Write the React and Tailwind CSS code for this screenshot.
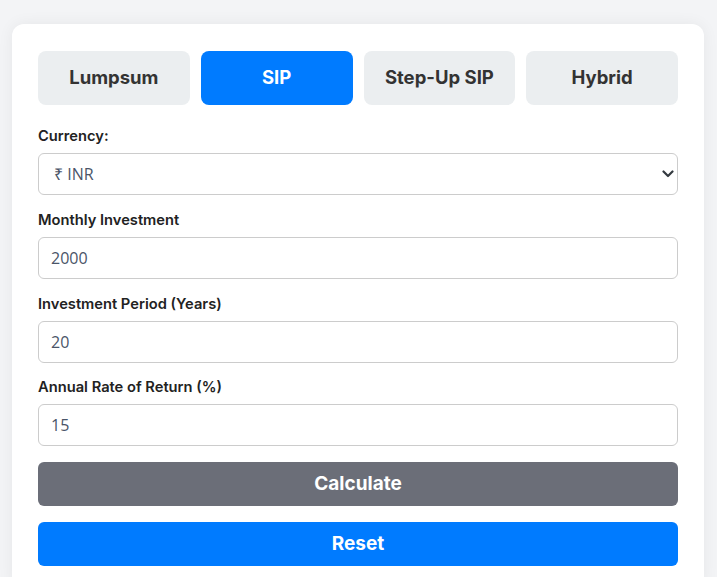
import React, { useState } from "react";

const tabs = ["Lumpsum", "SIP", "Step-Up SIP", "Hybrid"];

const fields = [
  { label: "Monthly Investment", value: "2000", gap: "mb-4" },
  { label: "Investment Period (Years)", value: "20", gap: "mb-[15px]" },
  { label: "Annual Rate of Return (%)", value: "15", gap: "mb-4" },
];

const Field = ({ label, gap = "mb-4", children }) => (
  <div className={gap}>
    <label className="block mb-2 text-[14.7px] leading-[18px] font-semibold text-[#222]">
      {label}
    </label>
    {children}
  </div>
);

const App = () => {
  const [active, setActive] = useState("SIP");
  const [values, setValues] = useState(fields.map((f) => f.value));

  return (
    <div
      className="min-h-screen bg-[#f3f4f6] pl-3 pr-[13px] pt-6"
      style={{ fontFamily: "Inter, 'Noto Sans', sans-serif" }}
    >
      <div className="bg-white rounded-xl shadow-[0_0_16px_rgba(0,0,0,0.06)] px-[26px] pt-[27px] pb-6">
        {/* calculator type tabs */}
        <div className="grid grid-cols-4 gap-[11px] mb-[22px]">
          {tabs.map((tab) => (
            <button
              key={tab}
              onClick={() => setActive(tab)}
              className={
                "h-[54px] rounded-lg text-[18.5px] font-bold " +
                (active === tab
                  ? "bg-[#007bff] text-white"
                  : "bg-[#ebeef0] text-[#333]")
              }
            >
              {tab}
            </button>
          ))}
        </div>

        <Field label="Currency:">
          <div className="relative">
            <select
              className="w-full h-[42px] appearance-none rounded-md border border-[#ccc] bg-white pl-[15px] text-base text-[#4a5568]"
              style={{ fontFamily: "'Open Sans', sans-serif" }}
              defaultValue="INR"
            >
              <option value="INR">₹ INR</option>
              <option value="USD">$ USD</option>
              <option value="EUR">€ EUR</option>
            </select>
            <svg
              className="absolute right-[4px] top-1/2 -translate-y-1/2 pointer-events-none"
              width="12"
              height="12"
              viewBox="0 0 12 12"
            >
              <path
                d="M1.5 3.5l4.5 4.5 4.5-4.5"
                fill="none"
                stroke="#343a40"
                strokeWidth="2.2"
                strokeLinecap="round"
                strokeLinejoin="round"
              />
            </svg>
          </div>
        </Field>

        {fields.map((f, i) => (
          <Field key={f.label} label={f.label} gap={f.gap}>
            <input
              type="number"
              value={values[i]}
              onChange={(e) => {
                const next = [...values];
                next[i] = e.target.value;
                setValues(next);
              }}
              className="w-full h-[42px] rounded-md border border-[#ccc] px-3 text-base text-[#4a5568] outline-none"
              style={{ fontFamily: "'Open Sans', sans-serif" }}
            />
          </Field>
        ))}

        <button className="w-full h-[44px] rounded-md bg-[#6b6e78] text-white text-[19px] font-bold mb-4">
          Calculate
        </button>
        <button
          onClick={() => setValues(fields.map((f) => f.value))}
          className="w-full h-[44px] rounded-md bg-[#007bff] text-white text-[19px] font-bold"
        >
          Reset
        </button>
      </div>
    </div>
  );
};

export default App;
